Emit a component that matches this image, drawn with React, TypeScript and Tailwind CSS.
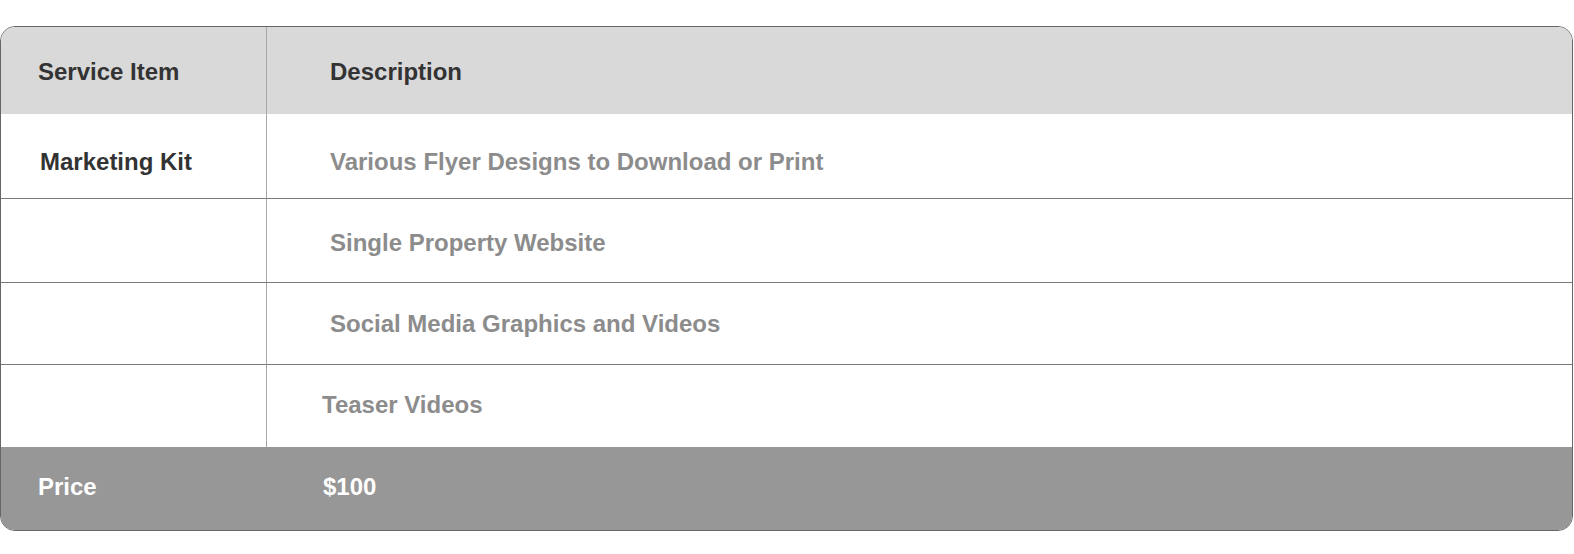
// Service pricing table: one item, several description lines, price footer.
const ROWS = [
  { item: "Marketing Kit", desc: "Various Flyer Designs to Download or Print", h: "h-[85px]", pad: "pl-[63px]", v: "pt-[11px]" },
  { item: "", desc: "Single Property Website", h: "h-[84px]", pad: "pl-[63px]", v: "pt-[4px]" },
  { item: "", desc: "Social Media Graphics and Videos", h: "h-[82px]", pad: "pl-[63px]", v: "pt-0" },
  { item: "", desc: "Teaser Videos", h: "h-[82px]", pad: "pl-[55px]", v: "pb-[2px]" },
];

export default function App() {
  return (
    <div className="min-h-screen bg-white pt-[26px] font-['Liberation_Sans',Arial,sans-serif] font-bold text-[24px]">
      <div className="w-[1573px] rounded-[15px] border border-[#666] overflow-hidden">
        {/* Header */}
        <div className="flex h-[87px] bg-[#d9d9d9] text-[#333]">
          <div className="w-[266px] flex items-center pl-[37px] pt-[2px] border-r border-[#a8a8a8]">Service Item</div>
          <div className="flex-1 flex items-center pl-[63px] pt-[2px]">Description</div>
        </div>

        {ROWS.map((r, i) => (
          <div key={i} className={`flex ${r.h} ${i < ROWS.length - 1 ? "border-b border-[#7a7a7a]" : ""}`}>
            <div className={`w-[266px] flex items-center pl-[39px] ${r.v} text-[#333] border-r border-[#a8a8a8]`}>{r.item}</div>
            <div className={`flex-1 flex items-center ${r.pad} ${r.v} text-[#8c8c8c]`}>{r.desc}</div>
          </div>
        ))}

        {/* Footer */}
        <div className="flex h-[83px] bg-[#979797] text-white">
          <div className="w-[266px] flex items-center pl-[37px] pb-[4px]">Price</div>
          <div className="flex-1 flex items-center pl-[56px] pb-[4px]">$100</div>
        </div>
      </div>
    </div>
  );
}
